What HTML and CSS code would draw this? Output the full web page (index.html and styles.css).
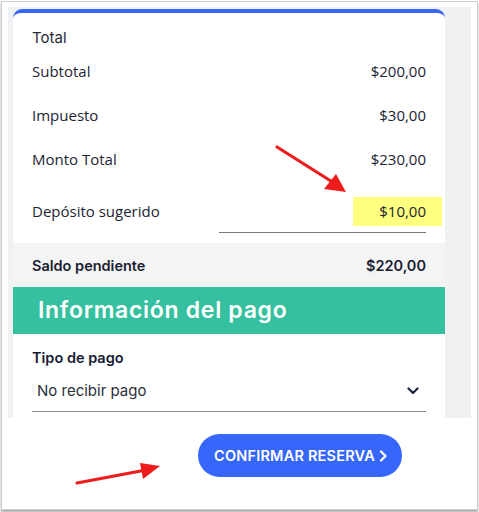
FILE: index.html
```html
<!DOCTYPE html>
<html lang="es">
<head>
<meta charset="utf-8">
<link rel="stylesheet" href="styles.css">
</head>
<body>
<div class="frame">
  <div class="panel">
    <div class="card">
      <div class="title">Total</div>
      <div class="row"><span>Subtotal</span><span>$200,00</span></div>
      <div class="row"><span>Impuesto</span><span>$30,00</span></div>
      <div class="row"><span>Monto Total</span><span>$230,00</span></div>
      <div class="deposit">
        <span class="dep-label">Depósito sugerido</span>
        <div class="dep-field"><span class="dep-value">$10,00</span></div>
      </div>
      <div class="balance"><span>Saldo pendiente</span><span>$220,00</span></div>
      <div class="section-head">Información del pago</div>
      <div class="pay">
        <div class="pay-label">Tipo de pago</div>
        <div class="select">
          <span>No recibir pago</span>
          <svg class="chev" width="12" height="8" viewBox="0 0 12 8"><path d="M1.5 1.5 L6 6 L10.5 1.5" fill="none" stroke="#1b2340" stroke-width="2.2" stroke-linecap="round" stroke-linejoin="round"/></svg>
        </div>
      </div>
    </div>
  </div>
  <div class="footer">
    <button class="confirm">CONFIRMAR RESERVA<svg width="9" height="12" viewBox="0 0 9 12"><path d="M2 1.5 L6.5 6 L2 10.5" fill="none" stroke="#fff" stroke-width="2.2" stroke-linecap="round" stroke-linejoin="round"/></svg></button>
  </div>
  <svg class="arrows" width="479" height="512" viewBox="0 0 479 512">
    <line x1="277" y1="147" x2="334" y2="183" stroke="#ee1c1c" stroke-width="3.2" stroke-linecap="round"/>
    <polygon points="346,192 324,189 336,174" fill="#ee1c1c"/>
    <line x1="77" y1="483" x2="146" y2="470" stroke="#ee1c1c" stroke-width="3.2" stroke-linecap="round"/>
    <polygon points="160,466 143,479 140,463" fill="#ee1c1c"/>
  </svg>
</div>
</body>
</html>
```
FILE: styles.css
```css
* { box-sizing: border-box; }
html, body { margin: 0; padding: 0; background: #fff; }
body { width: 479px; height: 512px; overflow: hidden; position: relative; }

.frame {
  position: relative;
  margin: 1px 0 0 1px;
  width: 477px;
  height: 509px;
  border: 1px solid #cfcfcf;
  box-shadow: 0 2px 2px rgba(0,0,0,0.35);
  background: #fff;
  padding: 5px 0 0 6px;
}

.panel {
  width: 463px;
  height: 411px;
  background: #f0f1f3;
  padding: 2px 26px 0 5px;
}

.card {
  background: #fff;
  height: 409px;
  border-top: 4px solid #3a66f7;
  border-radius: 9px 9px 0 0;
  overflow: hidden;
  color: #1d2433;
  font-family: "Open Sans", "Noto Sans", sans-serif;
  font-size: 15px;
}

.title {
  font-family: Inter, sans-serif;
  font-size: 15px;
  line-height: 20px;
  padding: 15px 19px 0;
  height: 36px;
  color: #262a33;
}

.row {
  display: flex;
  justify-content: space-between;
  align-items: center;
  height: 44px;
  padding: 0 19px;
  line-height: 20px;
}

.deposit {
  display: flex;
  justify-content: space-between;
  align-items: flex-start;
  height: 62px;
  padding: 16px 19px 0;
}
.dep-label { line-height: 29px; }
.dep-field {
  width: 207px;
  border-bottom: 1px solid #7a7a7a;
  padding-bottom: 6px;
  display: flex;
  justify-content: flex-end;
}
.dep-value {
  background: #ffff80;
  line-height: 29px;
  width: 89px;
  text-align: right;
  padding-right: 16px;
  margin-right: -16px;
}

.balance {
  display: flex;
  justify-content: space-between;
  align-items: center;
  height: 44px;
  padding: 0 19px;
  background: #f4f4f5;
  font-family: Inter, sans-serif;
  font-weight: 600;
  font-size: 14.5px;
  color: #1a2030;
}

.section-head {
  height: 47px;
  background: #35c09f;
  color: #fff;
  font-family: Inter, sans-serif;
  font-weight: 600;
  font-size: 23px;
  line-height: 47px;
  padding-left: 25px;
  letter-spacing: 0.7px;
}

.pay { padding: 14px 19px 0; }
.pay-label {
  font-family: Inter, sans-serif;
  font-weight: 600;
  font-size: 14.5px;
  line-height: 20px;
  color: #161b33;
}
.select {
  display: flex;
  justify-content: space-between;
  align-items: center;
  margin-top: 13px;
  padding: 0 7px 10px 5px;
  border-bottom: 1px solid #8a8a8a;
  font-family: Inter, sans-serif;
  font-size: 15px;
  line-height: 20px;
  color: #2a2f3a;
}

.footer {
  padding: 16px 0 0 190px;
}
.confirm {
  display: flex;
  align-items: center;
  justify-content: center;
  gap: 4px;
  width: 204px;
  height: 43px;
  border: 0;
  border-radius: 22px;
  background: #3766fb;
  color: #fff;
  font-family: Inter, sans-serif;
  font-weight: 600;
  font-size: 14.5px;
  letter-spacing: 0.2px;
  padding: 0 0 0 2px;
}

.arrows {
  position: absolute;
  left: -2px;
  top: -2px;
  pointer-events: none;
}
```
